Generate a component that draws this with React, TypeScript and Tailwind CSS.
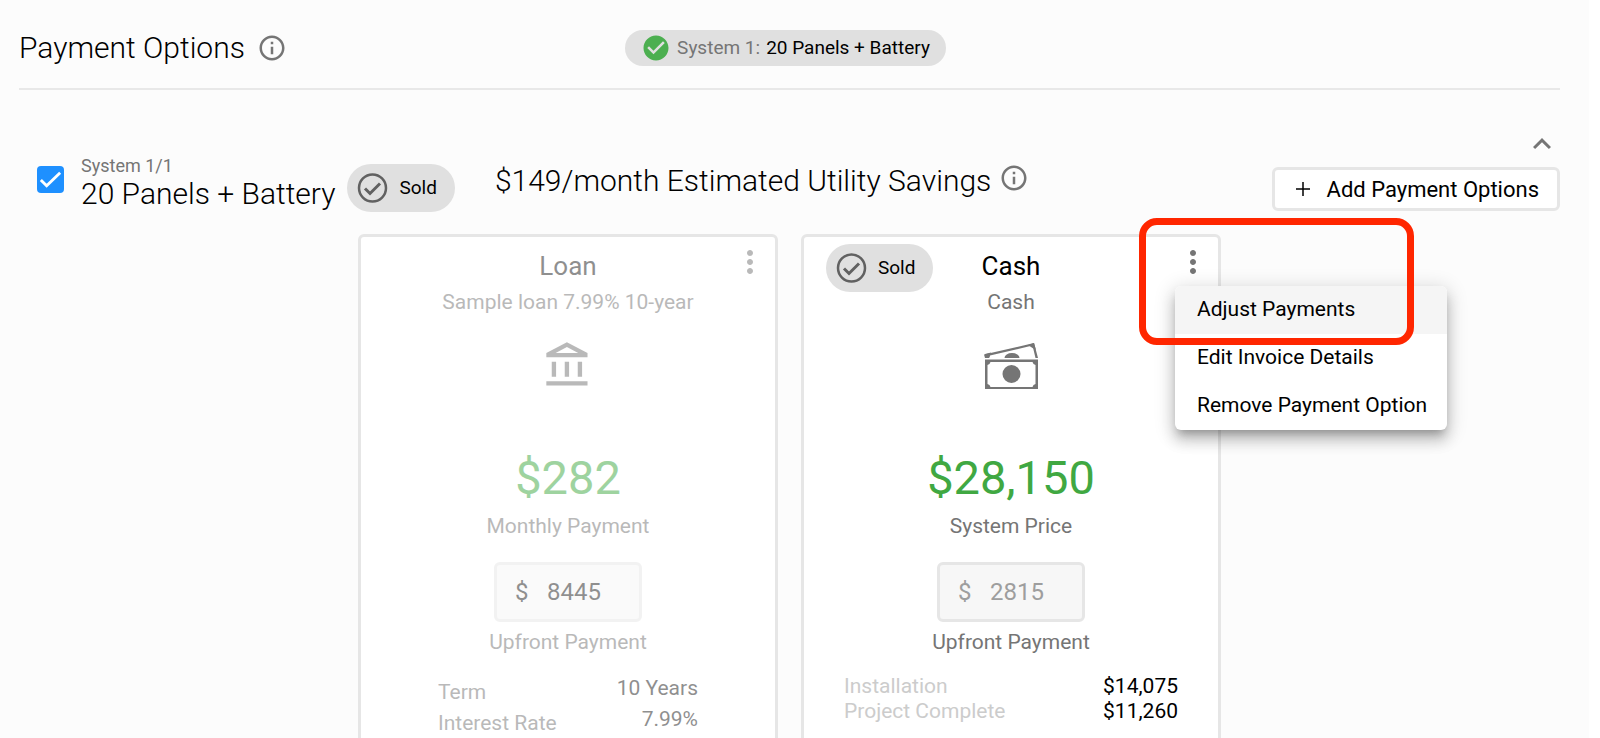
import { ReactNode } from "react";
import { clsx } from "clsx";
import {
  MdCheckCircle,
  MdExpandLess,
  MdInfoOutline,
  MdMoreVert,
  MdOutlineAccountBalance,
} from "react-icons/md";

type Row = { label: string; value: string };

const loanRows: Row[] = [
  { label: "Term", value: "10 Years" },
  { label: "Interest Rate", value: "7.99%" },
];

const cashRows: Row[] = [
  { label: "Installation", value: "$14,075" },
  { label: "Project Complete", value: "$11,260" },
];

const menuItems = [
  "Adjust Payments",
  "Edit Invoice Details",
  "Remove Payment Option",
];

function CashIcon() {
  return (
    <svg viewBox="0 0 54 48" className="h-12 w-[54px] fill-[#757575]">
      <path d="M0 12.500 50 1l4 15h-2.500L48.500 3.500 6 13.500 5 16H1z" />
      <path d="M44 3 50 1l2 7-3.500-2zM1 12l6-1.500L5 16H1z" />
      <path d="M20.500 16a7.500 5 0 0 1 15 0z" />
      <path
        fillRule="evenodd"
        d="M1 17.500h53V47H1zM3.500 23v19a4 4 0 0 1 3 3h42a4 4 0 0 1 3-3V23a4 4 0 0 1-3-3h-42a4 4 0 0 1-3 3z"
      />
      <circle cx="27.500" cy="32" r="9" />
    </svg>
  );
}

function SoldBadge() {
  return (
    <span className="flex h-12 items-center gap-2 rounded-full bg-[#e0e0e0] pr-[18px] pl-2 text-[19px] text-black">
      <svg viewBox="0 0 36 36" className="size-9 fill-none stroke-[#616161]">
        <circle cx="17.500" cy="18" r="13.500" strokeWidth="2.500" />
        <path d="m10 18.500 5 5 10-10" strokeWidth="3" />
      </svg>
      Sold
    </span>
  );
}

type PaymentCardProps = {
  id: string;
  title: string;
  subtitle: string;
  icon: ReactNode;
  amount: string;
  amountLabel: string;
  upfront: string;
  rows: Row[];
  faded?: boolean;
  sold?: boolean;
  children?: ReactNode;
};

function PaymentCard({
  id,
  title,
  subtitle,
  icon,
  amount,
  amountLabel,
  upfront,
  rows,
  faded,
  sold,
  children,
}: PaymentCardProps) {
  return (
    <section className="relative w-[420px] shrink-0 rounded-md border-[3px] border-[#e6e6e6] bg-white">
      <div
        className={clsx(
          "flex flex-col items-center pt-[9px] pb-12 text-[21px] text-[#757575]",
          faded && "opacity-50",
        )}
      >
        <h3
          className={clsx(
            "text-[26px] leading-10",
            faded ? "text-[#212121]" : "text-black",
          )}
        >
          {title}
        </h3>
        <p className="leading-8">{subtitle}</p>
        <div className="mt-4 flex h-16 items-center">{icon}</div>
        <p className="mt-12 text-[47px] leading-16 text-[#40a842]">{amount}</p>
        <p className="leading-8">{amountLabel}</p>
        <div
          className={clsx(
            "mt-5 flex h-15 w-[148px] items-center rounded-md border-[3px] border-[#e6e6e6] bg-[#f7f7f7] px-[18px] text-2xl",
            faded ? "text-[#212121]" : "text-[#9e9e9e]",
          )}
        >
          <span className="w-8">$</span>
          <input
            id={id}
            className="w-16 bg-transparent"
            defaultValue={upfront}
          />
        </div>
        <label htmlFor={id} className="mt-1 leading-8">
          Upfront Payment
        </label>
        <table className={clsx("mt-4", faded ? "w-[260px]" : "w-[334px]")}>
          <tbody>
            {rows.map((row) => (
              <tr key={row.label}>
                <th
                  scope="row"
                  className={clsx(
                    "text-left leading-[25px] font-normal",
                    faded ? "pt-[6px]" : "text-[#cccccc]",
                  )}
                >
                  {row.label}
                </th>
                <td
                  className={clsx(
                    "text-right leading-[25px]",
                    faded ? "pb-[2px] text-[#212121]" : "text-black",
                  )}
                >
                  {row.value}
                </td>
              </tr>
            ))}
          </tbody>
        </table>
      </div>
      {sold && (
        <div className="absolute top-[7px] left-[22px]">
          <SoldBadge />
        </div>
      )}
      <button
        type="button"
        aria-label={`${title} actions`}
        className={clsx(
          "absolute top-[7px] right-[7px] text-[#757575]",
          faded && "opacity-50",
        )}
      >
        <MdMoreVert className="size-9" />
      </button>
      {children}
    </section>
  );
}

export default function App() {
  return (
    <div className="h-screen overflow-hidden bg-white pr-[11px] font-['Roboto',sans-serif] text-black">
      <main className="h-full bg-[#fcfcfc] pr-[29px] pl-[19px]">
        <header className="grid grid-cols-[1fr_auto_1fr] items-center border-b-2 border-[#e8e8e8] pt-3 pr-2 pb-1">
          <div className="flex h-18 items-center gap-3">
            <h1 className="text-3xl font-light">Payment Options</h1>
            <MdInfoOutline className="size-[30px] text-[#757575]" />
          </div>
          <div className="flex h-9 items-center gap-[6px] rounded-full bg-[#e0e0e0] px-4 text-[19px]">
            <MdCheckCircle className="size-[30px] text-[#4caf50]" />
            <span className="text-[#757575]">System 1:</span>
            <span>20 Panels + Battery</span>
          </div>
        </header>

        <div className="flex items-start pt-9">
          <label className="flex items-start gap-[17px] pt-7 pl-[18px]">
            <span className="relative mt-3 flex size-[27px]">
              <input
                type="checkbox"
                defaultChecked
                className="size-[27px] appearance-none rounded-sm bg-white checked:bg-[#1e90ff]"
              />
              <svg
                viewBox="0 0 28 28"
                className="pointer-events-none absolute inset-0 fill-none stroke-white"
              >
                <path d="m4 14.500 6 6L24 7" strokeWidth="3" />
              </svg>
            </span>
            <span className="flex flex-col">
              <span className="text-lg leading-6 text-[#757575]">
                System 1/1
              </span>
              <span className="text-3xl leading-8 font-light">
                20 Panels + Battery
              </span>
            </span>
          </label>
          <div className="pt-[38px] pl-3">
            <SoldBadge />
          </div>
          <div className="flex items-start gap-2 pt-[37px] pl-10">
            <h2 className="text-3xl font-light">
              $149/month Estimated Utility Savings
            </h2>
            <MdInfoOutline className="size-[30px] text-[#757575]" />
          </div>
          <div className="ml-auto flex flex-col items-end">
            <button
              type="button"
              aria-label="Collapse"
              className="text-[#757575]"
            >
              <MdExpandLess className="size-9" />
            </button>
            <button
              type="button"
              className="mt-[5px] flex h-11 items-center gap-3 rounded-md border-[3px] border-[#e6e6e6] bg-white pr-[18px] pl-4 text-[22px]"
            >
              <svg viewBox="0 0 24 24" className="size-6 stroke-black">
                <path d="M12 5v14M5 12h14" strokeWidth="1.500" />
              </svg>
              Add Payment Options
            </button>
          </div>
        </div>

        <div className="mt-[22px] ml-[339px] flex gap-[23px]">
          <PaymentCard
            id="loan-upfront"
            title="Loan"
            subtitle="Sample loan 7.99% 10-year"
            icon={<MdOutlineAccountBalance className="size-[52px]" />}
            amount="$282"
            amountLabel="Monthly Payment"
            upfront="8445"
            rows={loanRows}
            faded
          />
          <PaymentCard
            id="cash-upfront"
            title="Cash"
            subtitle="Cash"
            icon={<CashIcon />}
            amount="$28,150"
            amountLabel="System Price"
            upfront="2815"
            rows={cashRows}
            sold
          >
            <ul className="absolute top-[49px] left-[371px] w-[272px] overflow-hidden rounded-md bg-white text-[21px] shadow-[0_7px_8px_-4px_rgba(0,0,0,0.25),0_11px_14px_1px_rgba(0,0,0,0.14),0_4px_19px_3px_rgba(0,0,0,0.14)]">
              {menuItems.map((item, index) => (
                <li key={item}>
                  <button
                    type="button"
                    className={clsx(
                      "h-12 w-full px-[22px] text-left whitespace-nowrap",
                      index === 0 && "bg-[#f5f5f5]",
                    )}
                  >
                    {item}
                  </button>
                </li>
              ))}
            </ul>
            <div className="pointer-events-none absolute top-[-19px] left-[335px] h-[127px] w-[275px] rounded-[18px] border-[7px] border-[#ff2600]" />
          </PaymentCard>
        </div>
      </main>
    </div>
  );
}
